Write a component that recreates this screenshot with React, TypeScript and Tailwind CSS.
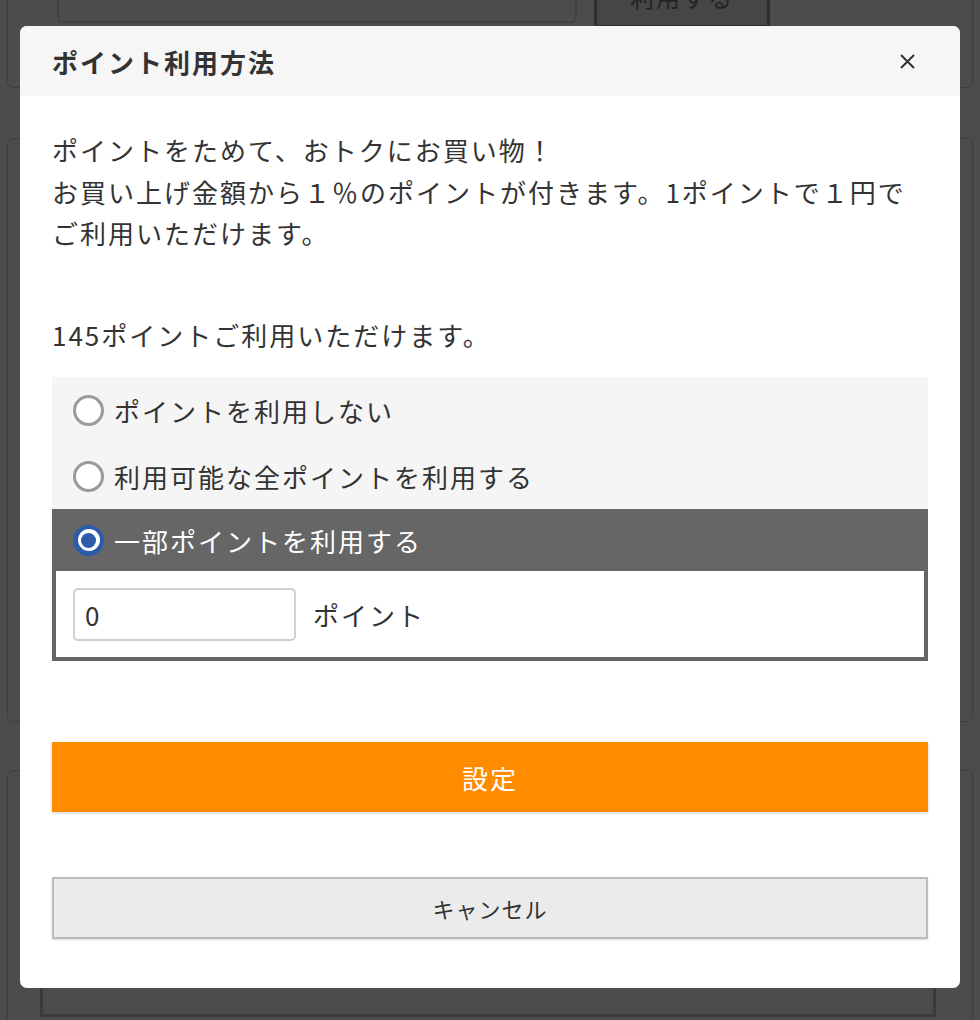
import React, { useState } from 'react';

type Mode = 'none' | 'all' | 'part';

const options: { value: Mode; label: string }[] = [
  { value: 'none', label: 'ポイントを利用しない' },
  { value: 'all', label: '利用可能な全ポイントを利用する' },
  { value: 'part', label: '一部ポイントを利用する' },
];

function Radio({ checked }: { checked: boolean }) {
  if (checked) {
    return (
      <span className="flex h-[31px] w-[31px] shrink-0 items-center justify-center rounded-full bg-[#2b5ba9]">
        <span className="flex h-[22px] w-[22px] items-center justify-center rounded-full bg-white">
          <span className="h-[15px] w-[15px] rounded-full bg-[#2b5ba9]" />
        </span>
      </span>
    );
  }
  return <span className="h-[31px] w-[31px] shrink-0 rounded-full border-[3px] border-[#9a9a9a] bg-white" />;
}

export default function App() {
  const [mode, setMode] = useState<Mode>('part');
  const [points, setPoints] = useState('0');

  return (
    <div className="relative h-[1020px] overflow-hidden bg-white font-['Noto_Sans_CJK_JP','Hiragino_Sans',sans-serif] text-[#333]">
      {/* page behind the dialog */}
      <div className="-mt-[40px] flex flex-col px-[7px]">
        <div className="flex h-[128px] items-end gap-[17px] rounded-md border border-[#cfcfcf] pb-[64px] pl-[49px]">
          <div className="h-[70px] w-[520px] rounded-md border-2 border-[#d9d9d9] bg-white" />
          <div className="-mb-[5px] flex h-[70px] w-[176px] items-center justify-center border-[3px] border-[#9a9a9a] bg-[#eaeaea] pt-[8px] text-[24px] tracking-[2px] text-[#777]">
            利用する
          </div>
        </div>
        <div className="mt-[50px] h-[584px] rounded-md border border-[#cfcfcf]" />
        <div className="mt-[48px] flex h-[260px] flex-col justify-end rounded-md border border-[#cfcfcf] pb-[12px] pl-[32px] pr-[36px]">
          <div className="h-[140px] border-[3px] border-[#c4c4c4]" />
        </div>
      </div>

      <div className="absolute inset-0 bg-black/70" />

      {/* dialog */}
      <div className="absolute left-[20px] top-[26px] flex h-[962px] w-[940px] flex-col overflow-hidden rounded-[7px] bg-white">
        <div className="flex h-[70px] shrink-0 items-center justify-between bg-[#f6f6f6] pl-[32px] pr-[43px]">
          <h2 className="text-[26px] font-bold tracking-[2px]">ポイント利用方法</h2>
          <button type="button" className="flex h-[20px] w-[20px] items-center justify-center">
            <svg width="15" height="15" viewBox="0 0 15 15" fill="none" stroke="#333" strokeWidth="2">
              <path d="M1 1l13 13M14 1L1 14" />
            </svg>
          </button>
        </div>

        <div className="flex flex-1 flex-col px-[32px] pt-[33px]">
          <p className="text-[26px] leading-[41.5px] tracking-[2px]">
            ポイントをためて、おトクにお買い物！
            <br />
            お買い上げ金額から１％のポイントが付きます。1ポイントで１円で
            <br />
            ご利用いただけます。
          </p>
          <p className="mt-[60px] text-[26px] leading-[41.5px] tracking-[2px]">145ポイントご利用いただけます。</p>

          <div className="mt-[22px] bg-[#f5f5f5]">
            {options.map((o) => {
              const checked = mode === o.value;
              return (
                <div key={o.value}>
                  <label
                    className={
                      checked
                        ? 'flex h-[62px] cursor-pointer items-center gap-[10px] bg-[#666] pl-[21px] text-[26px] tracking-[2px] text-white'
                        : 'flex h-[66px] cursor-pointer items-center gap-[10px] pl-[21px] text-[26px] tracking-[2px]'
                    }
                  >
                    <input
                      type="radio"
                      name="point"
                      className="hidden"
                      checked={checked}
                      onChange={() => setMode(o.value)}
                    />
                    <Radio checked={checked} />
                    <span>{o.label}</span>
                  </label>
                  {checked && o.value === 'part' && (
                    <div className="flex items-center gap-[17px] border-x-4 border-b-4 border-[#666] bg-white px-[17px] pb-[16px] pt-[17px]">
                      <input
                        value={points}
                        onChange={(e) => setPoints(e.target.value)}
                        className="h-[53px] w-[223px] rounded-[5px] border-2 border-[#cfcfcf] px-[10px] text-[26px] text-[#333] outline-none"
                      />
                      <span className="text-[26px] tracking-[2px]">ポイント</span>
                    </div>
                  )}
                </div>
              );
            })}
          </div>

          <button
            type="button"
            className="mt-[81px] h-[70px] w-full bg-[#ff8c00] text-[26px] tracking-[2px] text-white shadow-[0_1px_3px_rgba(0,0,0,0.2)]"
          >
            設定
          </button>
          <button
            type="button"
            className="mt-[65px] h-[62px] w-full border-2 border-[#bcbcbc] bg-[#ebebeb] text-[22px] tracking-[1px] text-[#333] shadow-[0_1px_2px_rgba(0,0,0,0.15)]"
          >
            キャンセル
          </button>
        </div>
      </div>
    </div>
  );
}
